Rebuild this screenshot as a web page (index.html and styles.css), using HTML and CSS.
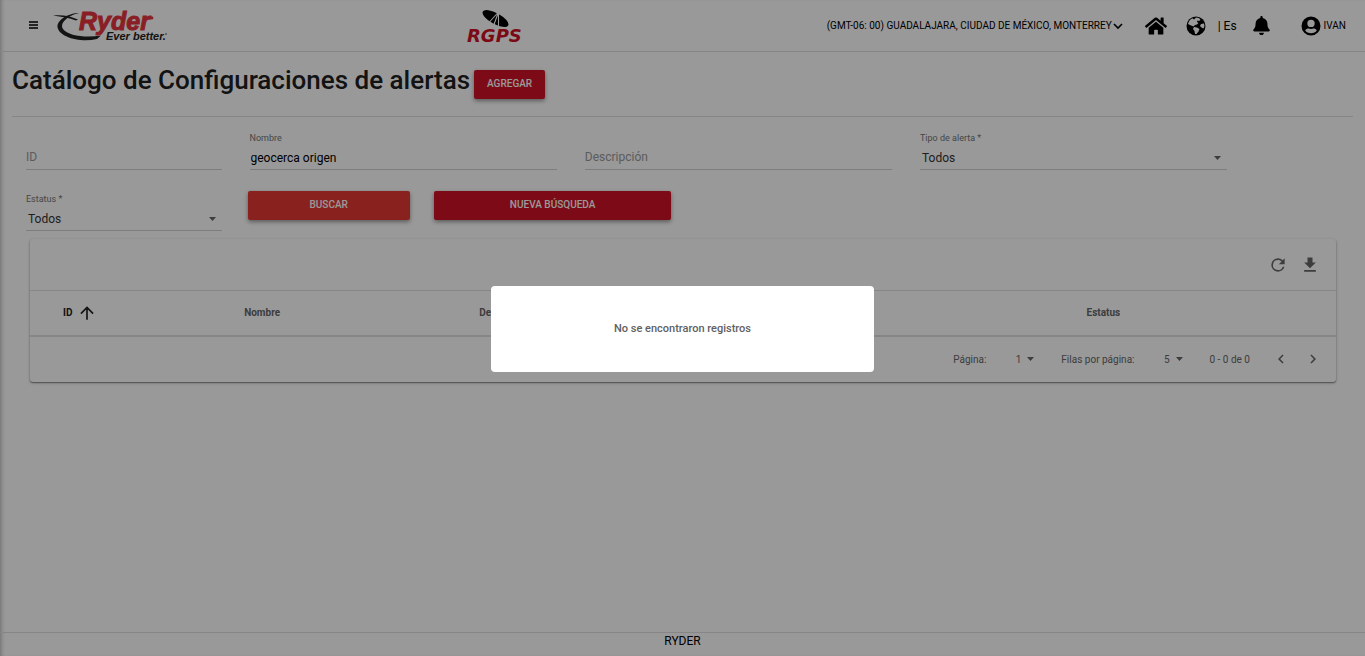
FILE: index.html
```html
<!DOCTYPE html>
<html lang="es">
<head>
    <meta charset="UTF-8">
    <meta name="viewport" content="width=device-width, initial-scale=1.0">
    <title>Catálogo de Configuraciones de alertas</title>
    <link rel="stylesheet" href="styles.css">
</head>
<body>
    <header class="topbar">
        <div class="topbar-left">
            <button type="button" class="icon-btn" aria-label="Menú">
                <svg width="9" height="9" viewBox="0 0 9 9"><path d="M0 1h9M0 4h9M0 7h9" stroke="#000" stroke-width="1.4"/></svg>
            </button>
            <a href="#" class="logo" aria-label="Ryder">
                <svg width="116" height="32" viewBox="0 0 116 32">
                    <path d="M0 5.600C9 4.600 17 6 25 9.500L23 10.500C16 8 9 7 0 5.600z" fill="#222"/>
                    <path d="M26 3C17 3 4 9 4.500 17C6 27 27 33 44 29L48 25.500C33 28 15 26 10 19C6 12 17 5 26 3z" fill="#222"/>
                    <text x="26" y="20" class="logo-name">Ryder</text>
                    <circle cx="99" cy="8" r="1.400" fill="#e53440"/>
                    <text x="53" y="30" class="logo-tag">Ever better.</text>
                    <path d="M112 24h2" stroke="#555" stroke-width="1"/>
                </svg>
            </a>
        </div>
        <a href="#" class="logo" aria-label="RGPS">
            <svg width="58" height="34" viewBox="0 0 58 34">
                <ellipse cx="28.500" cy="9.500" rx="14.500" ry="5.500" transform="rotate(29 28.500 9.500)"/>
                <path d="M31.500 3L22 13.500M31.500 3L27 15.500M31.500 3L31.500 17" stroke="#fff" stroke-width="1.100" fill="none"/>
                <text x="0" y="33" class="rgps-name">RGPS</text>
            </svg>
        </a>
        <nav class="topbar-right">
            <button type="button" class="timezone">
                (GMT-06: 00) GUADALAJARA, CIUDAD DE MÉXICO, MONTERREY
                <svg width="10" height="10" viewBox="0 0 10 10"><path d="M1 3l4 4 4-4" fill="none" stroke="#000" stroke-width="1.600"/></svg>
            </button>
            <a href="#" class="nav-home" aria-label="Inicio">
                <svg width="22" height="20" viewBox="0 0 576 512"><path d="M280.37 148.26L96 300.11V464a16 16 0 0 0 16 16l112.06-.29a16 16 0 0 0 15.92-16V368a16 16 0 0 1 16-16h64a16 16 0 0 1 16 16v95.64a16 16 0 0 0 16 16.05L464 480a16 16 0 0 0 16-16V300L295.67 148.26a12.19 12.19 0 0 0-15.3 0zM571.6 251.47L488 182.56V44.05a12 12 0 0 0-12-12h-56a12 12 0 0 0-12 12v72.61L318.47 43a48 48 0 0 0-61 0L4.34 251.47a12 12 0 0 0-1.6 16.9l25.5 31A12 12 0 0 0 45.15 301l235.22-193.74a12.19 12.19 0 0 1 15.3 0L530.9 301a12 12 0 0 0 16.9-1.6l25.5-31a12 12 0 0 0-1.7-16.93z"/></svg>
            </a>
            <a href="#" class="nav-lang">
                <svg width="20" height="20" viewBox="0 0 20 20">
                    <circle cx="10" cy="10" r="9.500"/>
                    <path d="M10 1.500L13 2L14.500 4L13 5L11.500 4.500L11 6L12.500 7L11 8.500L9 9L7.500 10.500L5 9.500L2 8C2.500 5.500 4 3.500 6.500 2.300L8 3.500z" fill="#fff"/>
                    <path d="M8 11L11 11.500L13.500 13L12.500 15.500L10.500 18L9 18L8.500 15L7 13z" fill="#fff"/>
                    <path d="M15 8L18 7.500L18.500 10L17.500 12.500L15.500 11.500L14 10z" fill="#fff"/>
                </svg>
                <span>| Es</span>
            </a>
            <a href="#" class="nav-bell" aria-label="Notificaciones">
                <svg width="17" height="19" viewBox="0 0 448 512"><path d="M224 512c35.32 0 63.97-28.65 63.97-64H160.03c0 35.35 28.65 64 63.97 64zm215.39-149.71c-19.32-20.76-55.47-51.99-55.47-154.29 0-77.7-54.48-139.9-127.94-155.16V32c0-17.67-14.32-32-31.98-32s-31.98 14.33-31.98 32v20.84C118.56 68.1 64.08 130.3 64.08 208c0 102.3-36.15 133.53-55.47 154.29-6 6.45-8.66 14.16-8.61 21.71.11 16.4 12.98 32 32.1 32h383.8c19.12 0 32-15.6 32.1-32 .05-7.55-2.61-15.27-8.61-21.71z"/></svg>
            </a>
            <a href="#" class="nav-user">
                <svg width="20" height="20" viewBox="2 2 20 20"><path d="M12 2.500a9.500 9.500 0 1 0 0 19 9.500 9.500 0 0 0 0-19zm0 3.200a3.700 3.700 0 1 1 0 7.400 3.700 3.700 0 0 1 0-7.400zm0 13.600c-2.500 0-4.500-1-5.800-2.700.8-1.400 2-2 3.300-2 .8.300 1.600.4 2.500.4s1.700-.1 2.500-.4c1.300 0 2.500.6 3.300 2-1.300 1.700-3.300 2.700-5.800 2.700z"/></svg>
                <span>IVAN</span>
            </a>
        </nav>
    </header>

    <main class="content">
        <div class="title-row">
            <h1>Catálogo de Configuraciones de alertas</h1>
            <button type="button" class="btn">AGREGAR</button>
        </div>

        <form class="filters">
            <div class="filter-row">
                <div class="field field-empty col-2">
                    <label for="id">ID</label>
                    <input type="text" id="id">
                </div>
                <div class="field col-3">
                    <label for="nombre">Nombre</label>
                    <input type="text" id="nombre" value="geocerca origen">
                </div>
                <div class="field field-empty col-3">
                    <label for="descripcion">Descripción</label>
                    <input type="text" id="descripcion">
                </div>
                <div class="field col-3">
                    <label for="tipo">Tipo de alerta *</label>
                    <select id="tipo"><option>Todos</option></select>
                </div>
            </div>
            <div class="filter-row">
                <div class="field col-2">
                    <label for="estatus">Estatus *</label>
                    <select id="estatus"><option>Todos</option></select>
                </div>
                <div class="action action-search">
                    <button type="button" class="btn btn-search">BUSCAR</button>
                </div>
                <div class="action action-new">
                    <button type="button" class="btn">NUEVA BÚSQUEDA</button>
                </div>
            </div>
        </form>

        <section class="card">
            <div class="card-tools">
                <button type="button" class="icon-btn" aria-label="Actualizar">
                    <svg width="20" height="20" viewBox="0 0 24 24"><path d="M17.650 6.350A7.958 7.958 0 0 0 12 4a8 8 0 1 0 7.730 10h-2.080A6 6 0 1 1 12 6c1.660 0 3.140.69 4.220 1.780L13 11h7V4l-2.350 2.350z"/></svg>
                </button>
                <button type="button" class="icon-btn" aria-label="Descargar">
                    <svg width="20" height="20" viewBox="0 0 24 24"><path d="M19 9h-4V3H9v6H5l7 7 7-7zM5 18v2h14v-2H5z"/></svg>
                </button>
            </div>
            <table>
                <thead>
                    <tr>
                        <th class="th-id">
                            <span class="sorted">ID
                                <svg width="20" height="20" viewBox="0 0 24 24"><path d="M4 12l1.410 1.410L11 7.830V20h2V7.830l5.580 5.590L20 12l-8-8-8 8z"/></svg>
                            </span>
                        </th>
                        <th class="th-name">Nombre</th>
                        <th class="th-desc">Descripción</th>
                        <th class="th-type">Tipo de alerta</th>
                        <th>Estatus</th>
                    </tr>
                </thead>
            </table>
            <div class="pager">
                <label for="pagina">Página:</label>
                <select id="pagina"><option>1</option></select>
                <label for="filas">Filas por página:</label>
                <select id="filas"><option>5</option></select>
                <span class="range">0 - 0 de 0</span>
                <button type="button" class="icon-btn" aria-label="Anterior">
                    <svg width="18" height="18" viewBox="0 0 24 24"><path d="M15.410 7.410L14 6l-6 6 6 6 1.410-1.410L10.830 12z"/></svg>
                </button>
                <button type="button" class="icon-btn" aria-label="Siguiente">
                    <svg width="18" height="18" viewBox="0 0 24 24"><path d="M10 6L8.590 7.410 13.170 12l-4.580 4.590L10 18l6-6z"/></svg>
                </button>
            </div>
        </section>
    </main>

    <footer>RYDER</footer>

    <div class="overlay">
        <div class="dialog" role="dialog" aria-label="Aviso">No se encontraron registros</div>
    </div>
</body>
</html>
```

FILE: styles.css
```css
* {
    box-sizing: border-box;
}

body {
    font-family: Roboto, "Liberation Sans", sans-serif;
    font-size: 12px;
    background-color: #fff;
    color: #000;
    margin: 0;
    min-height: 100vh;
    display: flex;
    flex-direction: column;
    box-shadow: inset 4px 0 4px -3px rgba(0, 0, 0, 0.3);
}

a {
    color: inherit;
    text-decoration: none;
}

button,
input,
select {
    font-family: inherit;
}

svg {
    display: block;
    flex: none;
    overflow: visible;
}

.icon-btn {
    display: flex;
    padding: 0;
    border: none;
    background: none;
    cursor: pointer;
}

/* Top bar */
.topbar {
    display: grid;
    grid-template-columns: 34.7% 1fr auto;
    align-items: center;
    height: 52px;
    padding-right: 19px;
    border-bottom: 1px solid #e0e0e0;
}

.topbar-left {
    display: flex;
    align-items: center;
    gap: 15px;
    padding-left: 29px;
}

.logo-name {
    font: italic 700 25px "Liberation Sans", sans-serif;
    fill: #e5343f;
    stroke: #e5343f;
    stroke-width: 1px;
}

.logo-tag {
    font: italic 700 11px "Liberation Sans", sans-serif;
    fill: #222;
}

.rgps-name {
    font: italic 700 18px "DejaVu Sans", sans-serif;
    fill: #ce1126;
}

.topbar-right {
    display: flex;
    align-items: center;
}

.timezone {
    display: flex;
    align-items: center;
    gap: 1px;
    padding: 0;
    border: none;
    background: none;
    color: #000;
    font-size: 10px;
    margin-right: 22px;
}

.nav-home {
    margin-right: 19px;
}

.nav-lang {
    display: flex;
    align-items: center;
    gap: 12px;
    margin-right: 16px;
}

.nav-bell {
    margin-right: 31px;
}

.nav-user {
    display: flex;
    align-items: center;
    gap: 3px;
    font-size: 10px;
}

/* Content */
.content {
    flex: 1;
    padding: 0 12px;
}

.title-row {
    display: flex;
    align-items: center;
    gap: 4px;
    height: 65px;
    border-bottom: 1px solid #e0e0e0;
}

h1 {
    margin: 0;
    padding-bottom: 8px;
    font-size: 26px;
    font-weight: 500;
    color: #212121;
}

.btn {
    height: 29px;
    padding: 0 13px 2px;
    border: none;
    border-radius: 2px;
    background-color: #d01127;
    color: #fff;
    font-size: 10px;
    font-weight: 500;
    box-shadow: 0 2px 4px rgba(0, 0, 0, 0.4);
    cursor: pointer;
}

.btn-search {
    background-color: #e53935;
}

.filters {
    padding-top: 13px;
}

.filter-row {
    display: flex;
    height: 61px;
}

.field {
    display: flex;
    flex-direction: column;
    justify-content: flex-end;
    height: 40px;
    padding: 0 14px;
}

.col-2 {
    width: 16.667%;
}

.col-3 {
    width: 25%;
}

.field label {
    font-size: 9px;
    line-height: 12px;
    color: #757575;
}

.field input,
.field select {
    width: 100%;
    height: 26px;
    padding: 2px 1px 0;
    border: none;
    border-bottom: 1px solid #d0d0d0;
    border-radius: 0;
    background-color: transparent;
    color: #000;
    font-size: 12px;
}

.field-empty {
    display: grid;
    grid-template-columns: 1fr;
    align-content: end;
}

.field-empty label,
.field-empty input {
    grid-area: 1 / 1;
}

.field-empty label {
    font-size: 12px;
    line-height: 26px;
    color: #999;
}

select {
    appearance: none;
    background: url("data:image/svg+xml,%3Csvg xmlns='http://www.w3.org/2000/svg' width='7' height='4'%3E%3Cpath d='M0 0h7L3.500 4z' fill='%23666'/%3E%3C/svg%3E") no-repeat right 7px center;
}

.field select {
    color: #333;
    padding-left: 2px;
    background-position: right 6px top 12px;
}

.action {
    padding: 0 12px;
}

.action .btn {
    width: 100%;
}

.action-search {
    width: 13.900%;
}

.action-new {
    width: 19.500%;
}

/* Results */
.card {
    margin: -13px 17px 0 18px;
    border-radius: 3px;
    background-color: #fff;
    box-shadow: 0 1px 3px rgba(0, 0, 0, 0.3), 0 1px 1px rgba(0, 0, 0, 0.3);
}

.card-tools {
    display: flex;
    align-items: center;
    justify-content: flex-end;
    gap: 12px;
    height: 51px;
    padding-right: 16px;
    fill: #666;
}

table {
    width: 100%;
    table-layout: fixed;
    border-collapse: collapse;
}

th {
    height: 45px;
    padding: 0;
    border-top: 1px solid #e0e0e0;
    border-bottom: 2px solid #e0e0e0;
    color: #666;
    font-size: 10px;
    font-weight: 700;
    text-align: left;
}

.th-id {
    width: 16.400%;
    padding-left: 33px;
}

.th-name {
    width: 18%;
}

.th-desc {
    width: 20%;
}

.th-type {
    width: 26.500%;
}

.sorted {
    display: flex;
    align-items: center;
    gap: 5px;
    color: #212121;
    fill: #212121;
}

.pager {
    display: flex;
    align-items: center;
    justify-content: flex-end;
    height: 45px;
    padding-right: 14px;
    color: #666;
    fill: #666;
    font-size: 10px;
}

.pager select {
    width: 48px;
    margin-right: 27px;
    padding: 0 13px 0 0;
    border: none;
    background-color: transparent;
    background-position: right 0 center;
    color: #666;
    font-size: 10px;
    text-align-last: right;
}

.range {
    margin-right: 22px;
}

.pager .icon-btn + .icon-btn {
    margin-left: 14px;
}

footer {
    height: 24px;
    border-top: 1px solid #e0e0e0;
    text-align: center;
    line-height: 17px;
}

/* Dialog */
.overlay {
    position: fixed;
    inset: 0;
    display: flex;
    align-items: center;
    justify-content: center;
    padding-top: 2px;
    background-color: rgba(0, 0, 0, 0.4);
}

.dialog {
    width: 28%;
    padding: 35px 20px;
    border-radius: 4px;
    background-color: #fff;
    color: #616161;
    font-size: 11px;
    font-weight: 500;
    line-height: 16px;
    text-align: center;
}
```
